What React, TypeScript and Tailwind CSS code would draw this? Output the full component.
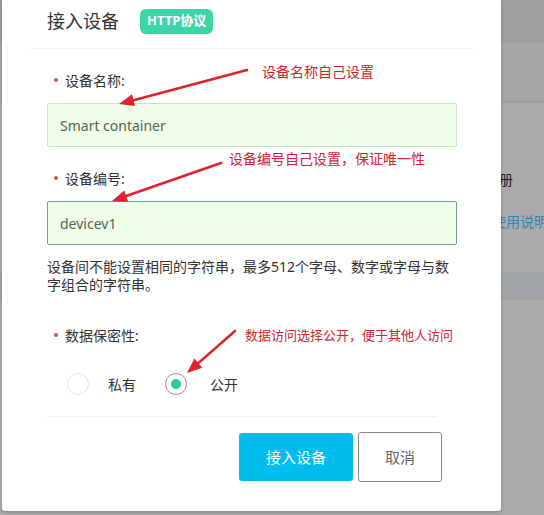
import React from 'react';

const font = { fontFamily: '"Noto Sans", "Noto Sans CJK SC", sans-serif' };

const Label: React.FC<{ text: string }> = ({ text }) => (
  <div className="flex items-center h-[20px] pl-[7px]">
    <span className="w-[4px] h-[4px] rounded-full bg-[#d9534f] mr-[7px]" />
    <span className="text-[14px] text-[#333]">{text}</span>
  </div>
);

const Arrow: React.FC<{ x1: number; y1: number; x2: number; y2: number }> = ({ x1, y1, x2, y2 }) => {
  const a = Math.atan2(y2 - y1, x2 - x1);
  const len = 15;
  const w = 6;
  const bx = x2 - len * Math.cos(a);
  const by = y2 - len * Math.sin(a);
  const px = -Math.sin(a) * w;
  const py = Math.cos(a) * w;
  return (
    <g>
      <line x1={x1} y1={y1} x2={bx} y2={by} stroke="#e0222e" strokeWidth="2.6" strokeLinecap="round" />
      <polygon points={`${x2},${y2} ${bx + px},${by + py} ${bx - px},${by - py}`} fill="#e0222e" />
    </g>
  );
};

const App: React.FC = () => {
  return (
    <div className="relative w-[544px] h-[515px] overflow-hidden bg-[#aaaaaa]" style={font}>
      {/* dimmed page behind the dialog */}
      <div className="flex flex-col">
        <div className="h-[43px] bg-[#9c9ea0]" />
        <div className="h-[57px] bg-[#a4a6a8]" />
        <div className="h-[3px] bg-[#9e9fa1]" />
        <div className="h-[169px] relative">
          <span className="absolute left-[499px] top-[66px] text-[14px] text-[#222] whitespace-nowrap">册</span>
          <span className="absolute left-[492px] top-[108px] text-[14px] text-[#2b86c4] whitespace-nowrap">使用说明</span>
        </div>
        <div className="h-[28px] bg-[#a0a4a7]" />
      </div>

      {/* dialog */}
      <div className="absolute left-[2px] top-0 w-[499px] h-[511px] bg-white rounded-b-[3px] shadow-[0_1px_3px_rgba(0,0,0,0.25)]">
        <div className="flex items-center h-[42px] pl-[45px]">
          <span className="text-[18px] text-[#333]">接入设备</span>
          <span className="ml-[21px] h-[25px] px-[7px] flex items-center rounded-[6px] bg-[#3dd4a8] text-white text-[13px] font-bold">
            HTTP协议
          </span>
        </div>
        <div className="mt-[6px] mx-[28px] h-px bg-[#f0f0f0]" />

        <div className="px-[45px]">
          <div className="mt-[21px]">
            <Label text="设备名称:" />
          </div>
          <div className="mt-[13px] w-[410px] h-[44px] flex items-center pl-[12px] bg-[#effde9] border border-[#cae3c6] rounded-[2px] text-[14px] text-[#556655]">
            Smart container
          </div>

          <div className="mt-[21px]">
            <Label text="设备编号:" />
          </div>
          <div className="mt-[13px] w-[410px] h-[44px] flex items-center pl-[12px] bg-[#effde9] border border-[#6f9aa0] rounded-[2px] text-[14px] text-[#556655]">
            devicev1
          </div>

          <p className="mt-[13px] w-[410px] text-[14px] leading-[18px] text-[#333]">
            设备间不能设置相同的字符串，最多512个字母、数字或字母与数字组合的字符串。
          </p>

          <div className="mt-[31px]">
            <Label text="数据保密性:" />
          </div>

          <div className="mt-[28px] flex items-center pl-[20px] h-[22px]">
            <span className="w-[22px] h-[22px] rounded-full border border-[#e4e4e4]" />
            <span className="ml-[19px] text-[14px] text-[#333]">私有</span>
            <span className="ml-[29px] w-[22px] h-[22px] rounded-full border border-[#8c9a96] flex items-center justify-center">
              <span className="w-[10px] h-[10px] rounded-full bg-[#2bcf91]" />
            </span>
            <span className="ml-[23px] text-[14px] text-[#333]">公开</span>
          </div>

          <div className="mt-[21px] w-[390px] h-px bg-[#f0f0f0]" />

          <div className="mt-[15px] w-[395px] flex justify-end items-center gap-[5px]">
            <button className="w-[114px] h-[48px] rounded-[3px] bg-[#00bdee] text-white text-[15px]">接入设备</button>
            <button className="w-[84px] h-[50px] rounded-[3px] border border-[#8a8a8a] bg-white text-[#666] text-[15px]">取消</button>
          </div>
        </div>
      </div>

      {/* annotations */}
      <svg className="absolute left-0 top-0 pointer-events-none" width="544" height="515">
        <Arrow x1={247} y1={70} x2={119} y2={104} />
        <Arrow x1={221} y1={163} x2={112} y2={201} />
        <Arrow x1={235} y1={331} x2={187} y2={373} />
      </svg>
      <span className="absolute left-[262px] top-[62px] text-[14px] leading-[20px] text-[#d2232c] whitespace-nowrap">设备名称自己设置</span>
      <span className="absolute left-[229px] top-[149px] text-[14px] leading-[20px] text-[#d2232c] whitespace-nowrap">设备编号自己设置，保证唯一性</span>
      <span className="absolute left-[245px] top-[325px] text-[13px] leading-[20px] text-[#d2232c] whitespace-nowrap">数据访问选择公开，便于其他人访问</span>
    </div>
  );
};

export default App;
